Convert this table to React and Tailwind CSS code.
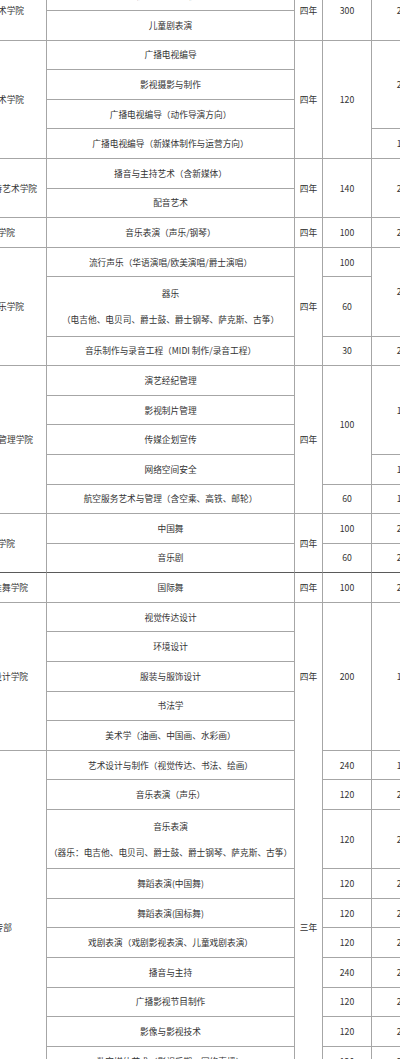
import React from 'react';

const LINE = 'border-[#a6a6a6]';

function C({ rs, children, bottom = 'normal', className = '' }) {
  let b = 'border-r border-b border-[#a6a6a6]';
  if (bottom === 'dark') b = 'border-r border-b border-r-[#a6a6a6] border-b-[#5a5a5a]';
  if (bottom === 'none') b = 'border-r border-[#a6a6a6]';
  return (
    <td rowSpan={rs} className={`${b} p-0 text-center align-middle ${className}`}>
      {children}
    </td>
  );
}

function Name({ children, pr }) {
  return <div className={`flex justify-end whitespace-nowrap ${pr}`}>{children}</div>;
}

function Two({ a, b }) {
  return (
    <div className="flex flex-col gap-[13px] leading-[13px]">
      <div>{a}</div>
      <div>{b}</div>
    </div>
  );
}

export default function App() {
  const R = 'h-[29.6px]';
  const R2 = 'h-[59.2px]';
  return (
    <div className="w-[400px] h-[1059px] overflow-hidden bg-white text-[#333] text-[8.7px] leading-[13px] font-['Noto_Sans_CJK_SC','Microsoft_YaHei',sans-serif]">
      <table className="mt-[-18.6px] table-fixed border-separate border-spacing-0 w-[437px]">
        <colgroup>
          <col className="w-[47px]" />
          <col className="w-[248px]" />
          <col className="w-[28px]" />
          <col className="w-[49px]" />
          <col className="w-[65px]" />
        </colgroup>
        <tbody>
          {/* A */}
          <tr className={R}>
            <C rs={2}><Name pr="pr-[22px]">戏剧影视艺术学院</Name></C>
            <C>戏剧影视表演（含影视剧表演）</C>
            <C rs={2}>四年</C>
            <C rs={2}>300</C>
            <C rs={2}>200</C>
          </tr>
          <tr className={R}>
            <C>儿童剧表演</C>
          </tr>
          {/* B */}
          <tr className={R}>
            <C rs={4}><Name pr="pr-[22px]">广播电视艺术学院</Name></C>
            <C>广播电视编导</C>
            <C rs={4}>四年</C>
            <C rs={4}>120</C>
            <C rs={3}>200</C>
          </tr>
          <tr className={R}><C>影视摄影与制作</C></tr>
          <tr className={R}><C>广播电视编导（动作导演方向）</C></tr>
          <tr className={R}>
            <C>广播电视编导（新媒体制作与运营方向）</C>
            <C>180</C>
          </tr>
          {/* C */}
          <tr className={R}>
            <C rs={2}><Name pr="pr-[9px]">播音与主持艺术学院</Name></C>
            <C>播音与主持艺术（含新媒体）</C>
            <C rs={2}>四年</C>
            <C rs={2}>140</C>
            <C rs={2}>200</C>
          </tr>
          <tr className={R}><C>配音艺术</C></tr>
          {/* D */}
          <tr className={R}>
            <C><Name pr="pr-[31px]">音乐学院</Name></C>
            <C>音乐表演（声乐/钢琴）</C>
            <C>四年</C>
            <C>100</C>
            <C>200</C>
          </tr>
          {/* E */}
          <tr className={R}>
            <C rs={3}><Name pr="pr-[22px]">现代音乐学院</Name></C>
            <C>流行声乐（华语演唱/欧美演唱/爵士演唱）</C>
            <C rs={3}>四年</C>
            <C>100</C>
            <C rs={2}>200</C>
          </tr>
          <tr className={R2}>
            <C><Two a="器乐" b="（电吉他、电贝司、爵士鼓、爵士钢琴、萨克斯、古筝）" /></C>
            <C>60</C>
          </tr>
          <tr className={R}>
            <C>音乐制作与录音工程（MIDI 制作/录音工程）</C>
            <C>30</C>
            <C>200</C>
          </tr>
          {/* F */}
          <tr className={R}>
            <C rs={5}><Name pr="pr-[13px]">艺术管理学院</Name></C>
            <C>演艺经纪管理</C>
            <C rs={5}>四年</C>
            <C rs={4}>100</C>
            <C rs={3}>180</C>
          </tr>
          <tr className={R}><C>影视制片管理</C></tr>
          <tr className={R}><C>传媒企划宣传</C></tr>
          <tr className={R}>
            <C>网络空间安全</C>
            <C>180</C>
          </tr>
          <tr className={R}>
            <C>航空服务艺术与管理（含空乘、高铁、邮轮）</C>
            <C>60</C>
            <C>180</C>
          </tr>
          {/* G */}
          <tr className={R}>
            <C rs={2} bottom="dark"><Name pr="pr-[31px]">舞蹈学院</Name></C>
            <C>中国舞</C>
            <C rs={2} bottom="dark">四年</C>
            <C>100</C>
            <C>200</C>
          </tr>
          <tr className={R}>
            <C bottom="dark">音乐剧</C>
            <C bottom="dark">60</C>
            <C bottom="dark">200</C>
          </tr>
          {/* H */}
          <tr className={R}>
            <C><Name pr="pr-[18px]">国际标准舞学院</Name></C>
            <C>国际舞</C>
            <C>四年</C>
            <C>100</C>
            <C>200</C>
          </tr>
          {/* I */}
          <tr className={R}>
            <C rs={5}><Name pr="pr-[18px]">艺术设计学院</Name></C>
            <C>视觉传达设计</C>
            <C rs={5} bottom="none">四年</C>
            <C rs={5}>200</C>
            <C rs={5}>180</C>
          </tr>
          <tr className={R}><C>环境设计</C></tr>
          <tr className={R}><C>服装与服饰设计</C></tr>
          <tr className={R}><C>书法学</C></tr>
          <tr className={R}><C>美术学（油画、中国画、水彩画）</C></tr>
          {/* J */}
          <tr className={R}>
            <C rs={11}><Name pr="pr-[34px]">大专部</Name></C>
            <C>艺术设计与制作（视觉传达、书法、绘画）</C>
            <C rs={11}>三年</C>
            <C>240</C>
            <C>180</C>
          </tr>
          <tr className={R}>
            <C>音乐表演（声乐）</C>
            <C>120</C>
            <C>200</C>
          </tr>
          <tr className={R2}>
            <C><Two a="音乐表演" b="（器乐：电吉他、电贝司、爵士鼓、爵士钢琴、萨克斯、古筝）" /></C>
            <C>120</C>
            <C>200</C>
          </tr>
          <tr className={R}>
            <C>舞蹈表演(中国舞)</C>
            <C>120</C>
            <C>200</C>
          </tr>
          <tr className={R}>
            <C>舞蹈表演(国标舞)</C>
            <C>120</C>
            <C>200</C>
          </tr>
          <tr className={R}>
            <C>戏剧表演（戏剧影视表演、儿童戏剧表演）</C>
            <C>120</C>
            <C>200</C>
          </tr>
          <tr className={R}>
            <C>播音与主持</C>
            <C>240</C>
            <C>200</C>
          </tr>
          <tr className={R}>
            <C>广播影视节目制作</C>
            <C>120</C>
            <C>200</C>
          </tr>
          <tr className={R}>
            <C>影像与影视技术</C>
            <C>120</C>
            <C>200</C>
          </tr>
          <tr className={R}>
            <C>数字媒体艺术（影视后期、网络直播）</C>
            <C>120</C>
            <C>200</C>
          </tr>
          <tr className={R}>
            <C>航空服务艺术与管理</C>
            <C>120</C>
            <C>180</C>
          </tr>
        </tbody>
      </table>
    </div>
  );
}
